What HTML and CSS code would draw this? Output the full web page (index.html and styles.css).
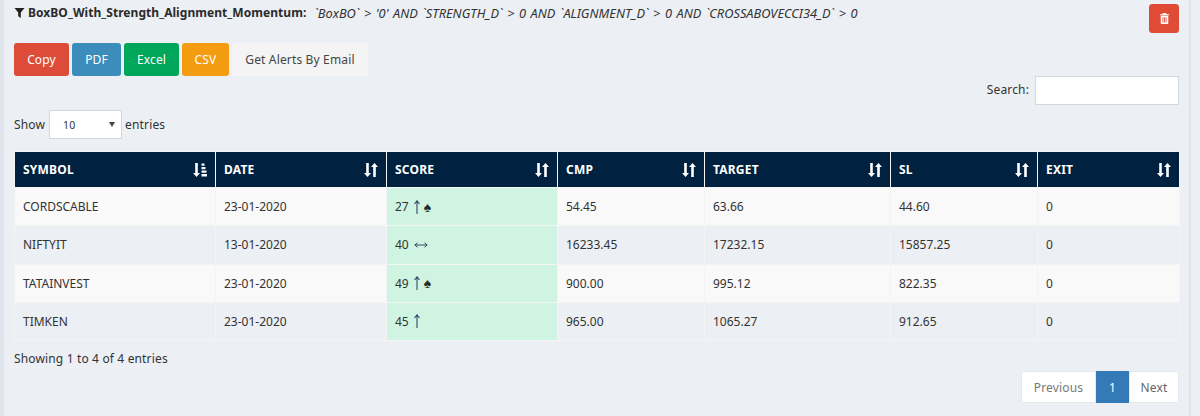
FILE: index.html
```html
<!DOCTYPE html>
<html lang="en">
<head>
<meta charset="utf-8">
<title>Screener</title>
<link rel="stylesheet" href="styles.css">
</head>
<body>
<div class="panel">
  <div class="head">
    <p class="filter">
      <svg class="funnel" viewBox="0 0 10 10"><path d="M0 0h10L6.300 4.600V10L3.700 8.200V4.600z"/></svg>
      <b>BoxBO_With_Strength_Alignment_Momentum:</b>
      <i>`BoxBO` &gt; '0' AND `STRENGTH_D` &gt; 0 AND `ALIGNMENT_D` &gt; 0 AND `CROSSABOVECCI34_D` &gt; 0</i>
    </p>
    <button class="trash" type="button" aria-label="Delete">
      <svg viewBox="0 0 10 12"><path fill-rule="evenodd" d="M3.200 0h3.600l.5 1.200H10v1.200H0V1.200h2.700zM.8 3h8.400v8a1 1 0 0 1-1 1H1.800a1 1 0 0 1-1-1zM2.800 4.500v6h.9v-6zM4.550 4.500v6h.9v-6zM6.300 4.500v6h.9v-6z"/></svg>
    </button>
  </div>
  <div class="actions">
    <a class="btn red">Copy</a>
    <a class="btn blue">PDF</a>
    <a class="btn green">Excel</a>
    <a class="btn orange">CSV</a>
    <a class="btn plain">Get Alerts By Email</a>
  </div>
  <div class="search-row">
    <label for="q">Search:</label>
    <input id="q" type="text">
  </div>
  <div class="length-row">
    <span>Show</span>
    <div class="select"><span>10</span><span class="caret"></span></div>
    <span>entries</span>
  </div>
  <table>
    <colgroup>
      <col class="c1"><col class="c2"><col class="c3"><col class="c4"><col class="c5"><col class="c6"><col class="c7">
    </colgroup>
    <thead>
      <tr>
        <th><div class="th"><span>SYMBOL</span><svg class="sort" viewBox="0 0 14 14"><path d="M2.200 0h2.600v10H7l-3.500 4L0 10h2.200zM8.500 0.500h3v2.200h-3zM8.500 4h4v2.200h-4zM8.500 7.500h5v2.200h-5zM8.500 11h5.500v2.400H8.500z"/></svg></div></th>
        <th><div class="th"><span>DATE</span><svg class="sort" viewBox="0 0 14 14"><path d="M2.200 0h2.600v10H7l-3.500 4L0 10h2.200zM9.200 14h2.600V4H14L10.500 0 7 4h2.200z"/></svg></div></th>
        <th><div class="th"><span>SCORE</span><svg class="sort" viewBox="0 0 14 14"><path d="M2.200 0h2.600v10H7l-3.500 4L0 10h2.200zM9.200 14h2.600V4H14L10.500 0 7 4h2.200z"/></svg></div></th>
        <th><div class="th"><span>CMP</span><svg class="sort" viewBox="0 0 14 14"><path d="M2.200 0h2.600v10H7l-3.500 4L0 10h2.200zM9.200 14h2.600V4H14L10.500 0 7 4h2.200z"/></svg></div></th>
        <th><div class="th"><span>TARGET</span><svg class="sort" viewBox="0 0 14 14"><path d="M2.200 0h2.600v10H7l-3.500 4L0 10h2.200zM9.200 14h2.600V4H14L10.500 0 7 4h2.200z"/></svg></div></th>
        <th><div class="th"><span>SL</span><svg class="sort" viewBox="0 0 14 14"><path d="M2.200 0h2.600v10H7l-3.500 4L0 10h2.200zM9.200 14h2.600V4H14L10.500 0 7 4h2.200z"/></svg></div></th>
        <th><div class="th"><span>EXIT</span><svg class="sort" viewBox="0 0 14 14"><path d="M2.200 0h2.600v10H7l-3.500 4L0 10h2.200zM9.200 14h2.600V4H14L10.500 0 7 4h2.200z"/></svg></div></th>
      </tr>
    </thead>
    <tbody>
      <tr><td>CORDSCABLE</td><td>23-01-2020</td><td class="score"><div class="sc"><span>27</span><svg class="up" viewBox="0 0 6 14"><path d="M3 14V1M.5 4 3 .8 5.500 4"/></svg><span class="spade">♠</span></div></td><td>54.45</td><td>63.66</td><td>44.60</td><td>0</td></tr>
      <tr><td>NIFTYIT</td><td>13-01-2020</td><td class="score"><div class="sc"><span>40</span><svg class="both" viewBox="0 0 14 6"><path d="M1 3h12M3.500.8 .8 3l2.700 2.200M10.500.8 13.200 3l-2.700 2.200"/></svg></div></td><td>16233.45</td><td>17232.15</td><td>15857.25</td><td>0</td></tr>
      <tr><td>TATAINVEST</td><td>23-01-2020</td><td class="score"><div class="sc"><span>49</span><svg class="up" viewBox="0 0 6 14"><path d="M3 14V1M.5 4 3 .8 5.500 4"/></svg><span class="spade">♠</span></div></td><td>900.00</td><td>995.12</td><td>822.35</td><td>0</td></tr>
      <tr><td>TIMKEN</td><td>23-01-2020</td><td class="score"><div class="sc"><span>45</span><svg class="up" viewBox="0 0 6 14"><path d="M3 14V1M.5 4 3 .8 5.500 4"/></svg></div></td><td>965.00</td><td>1065.27</td><td>912.65</td><td>0</td></tr>
    </tbody>
  </table>
  <p class="info">Showing 1 to 4 of 4 entries</p>
  <div class="pager">
    <a class="page first">Previous</a>
    <a class="page current">1</a>
    <a class="page last">Next</a>
  </div>
</div>
</body>
</html>
```
FILE: styles.css
```css
* { box-sizing: border-box; }
html, body { margin: 0; height: 100%; }
body {
  background: #eceff4;
  font-family: "Noto Sans", "Liberation Sans", sans-serif;
  font-size: 12px;
  letter-spacing: 0.15px;
  color: #333;
  overflow: hidden;
}
.panel {
  width: 1191px;
  height: 416px;
  border-left: 4px solid #dfe3ea;
  border-right: 2px solid #dfe3ea;
  padding: 0 10px;
}
.head { display: flex; justify-content: space-between; align-items: flex-start; padding-top: 4px; height: 43px; }
.filter { margin: -1px 0 0; font-size: 12px; line-height: 20px; display: flex; align-items: center; gap: 3px; white-space: pre; color: #333; letter-spacing: 0; }
.filter b { font-weight: 700; color: #2b2b2b; letter-spacing: 0.05px; }
.filter i { margin-left: 5px; font-family: "Noto Sans", sans-serif; font-size: 12.800px; word-spacing: 1.200px; }
.funnel { width: 11px; height: 10px; fill: #222; }
.trash {
  width: 30px; height: 29px; background: #e04b36; border: 1px solid #dd4b39; border-radius: 3px;
  display: flex; align-items: center; justify-content: center; padding: 0;
}
.trash svg { width: 9px; height: 11px; fill: #fff; }
.actions { display: flex; gap: 3px; height: 33px; }
.btn {
  height: 33px; display: flex; align-items: center; justify-content: center; border-radius: 3px;
  color: #fff; font-size: 12px; border: 1px solid transparent;
}
.red { background: #dd4b39; width: 55px; }
.blue { background: #3c8dbc; width: 49px; }
.green { background: #00a65a; width: 55px; }
.orange { background: #f39c12; width: 47px; }
.plain { background: #f4f4f4; color: #444; width: 136px; }
.search-row { display: flex; justify-content: flex-end; align-items: center; gap: 6px; height: 29px; }
.search-row label { position: relative; top: -1px; }
.search-row input { width: 144px; height: 29px; border: 1px solid #d2d6de; background: #fff; }
.length-row { display: flex; align-items: center; gap: 3px; height: 29px; margin-top: 5px; }
.select {
  width: 73px; height: 29px; background: #fff; border: 1px solid #d2d6de; margin-left: 1px;
  display: flex; align-items: center; justify-content: space-between; padding: 0 6px 0 13px; font-size: 10.500px;
}
.caret { width: 0; height: 0; border-left: 3px solid transparent; border-right: 3px solid transparent; border-top: 5px solid #444; }
table {
  width: 1165px; margin-top: 12px; table-layout: fixed; border-collapse: collapse;
}
.c1 { width: 201px; } .c2 { width: 171px; } .c3 { width: 171px; } .c4 { width: 147px; }
.c5 { width: 186px; } .c6 { width: 147px; } .c7 { width: 142px; }
th {
  background: #00213f; color: #fff; height: 36px; padding: 0 8px; border: 1px solid #f4f4f4; text-align: left;
  font-size: 12px; font-weight: 700; letter-spacing: 0.2px;
}
.th { display: flex; justify-content: space-between; align-items: center; }
.sort { width: 14px; height: 14px; fill: #fff; }
td { height: 38.250px; padding: 0 8px; border: 1px solid #f4f4f4; font-size: 12px; color: #333; letter-spacing: 0; }
tbody tr:nth-child(odd) td { background: #f9f9f9; }
tbody tr:nth-child(even) td { background: #eceff4; }
tbody tr td.score { background: #cff5e2; }
.sc { display: flex; align-items: center; gap: 5px; }
.up { width: 6px; height: 14px; fill: none; stroke: #2f4a66; stroke-width: 1.100; }
.both { width: 14px; height: 6px; fill: none; stroke: #2f4a66; stroke-width: 1; }
.spade { font-family: "Liberation Sans", sans-serif; color: #2a2a2a; font-size: 14px; line-height: 1; letter-spacing: 0; margin-left: -1px; }
.info { margin: 9px 0 0; line-height: 17px; color: #333; }
.pager { display: flex; justify-content: flex-end; margin-top: 4px; }
.page {
  height: 32px; display: flex; align-items: center; justify-content: center; background: #fff;
  border: 1px solid #e5e8ee; color: #777;
}
.first { width: 75px; border-radius: 3px 0 0 3px; }
.current { width: 33px; background: #337ab7; border-color: #337ab7; color: #fff; }
.last { width: 50px; border-radius: 0 3px 3px 0; color: #666; }
```
